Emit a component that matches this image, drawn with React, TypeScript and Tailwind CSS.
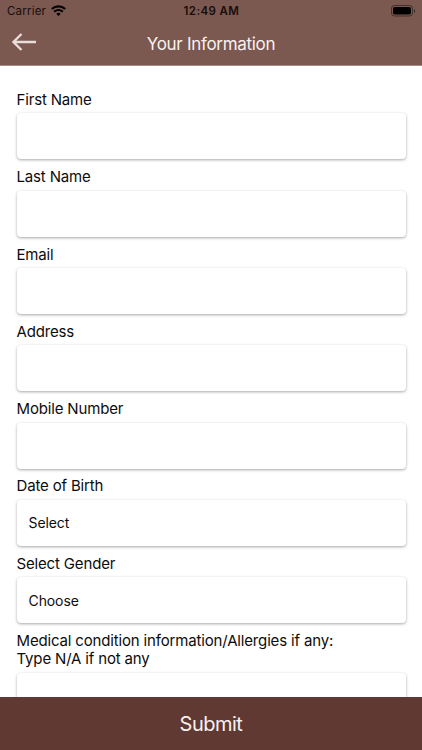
const fields = [
  { label: "First Name" },
  { label: "Last Name" },
  { label: "Email" },
  { label: "Address" },
  { label: "Mobile Number" },
  { label: "Date of Birth", value: "Select" },
  { label: "Select Gender", value: "Choose" },
  { label: "Medical condition information/Allergies if any:\nType N/A if not any" },
];

function StatusBar() {
  return (
    <div className="grid h-[22px] grid-cols-3 items-center pr-[6px] pl-[7px] text-[11.5px] text-[#180e0c]">
      <div className="flex items-center gap-[5px]">
        <span className="pt-px tracking-[0.2px]">Carrier</span>
        <svg className="-mt-px" width="15" height="11" viewBox="0 0 15 11" fill="none" stroke="#000" strokeWidth="2.1">
          <path d="M0.8 4.1a9.6 9.6 0 0 1 13.4 0" />
          <path d="M3.2 6.7a6.2 6.2 0 0 1 8.6 0" />
          <path d="M7.5 11L5.3 8.8a3.1 3.1 0 0 1 4.4 0z" fill="#000" stroke="none" />
        </svg>
      </div>
      <div className="pt-px text-center font-semibold tracking-[0.4px] whitespace-nowrap">12:49 AM</div>
      <svg className="-mt-px justify-self-end" width="25" height="12" viewBox="0 0 25 12">
        <rect x="0.5" y="0.5" width="21" height="10.5" rx="3" fill="none" stroke="#000" strokeOpacity="0.45" />
        <rect x="2" y="2" width="18" height="7.5" rx="1.8" />
        <path d="M23 4v4c1.6-.8 1.6-3.2 0-4z" fillOpacity="0.5" />
      </svg>
    </div>
  );
}

function Field({ label, value }: { label: string; value?: string }) {
  return (
    <div className="mb-[8.9px]">
      <div className="mb-[4px] text-[15px] leading-[18.4px] tracking-[-0.16px] whitespace-pre-line">{label}</div>
      <div className="flex h-[46px] items-center rounded-[4px] bg-white px-[12px] text-[14px] tracking-[-0.1px] shadow-[0_1px_3px_rgba(0,0,0,0.35)]">
        {value}
      </div>
    </div>
  );
}

export default function App() {
  return (
    <div className="flex h-[750px] w-[422px] flex-col overflow-hidden bg-white font-['Inter',sans-serif] text-[#0c0c0c]">
      <header className="h-[66px] shrink-0 border-b border-[#a58c87] bg-[#7b5850]">
        <StatusBar />
        <div className="grid h-[43px] grid-cols-[48px_1fr_48px] items-center text-[#f8f1ef]">
          <svg className="-mt-[3px] ml-[12px]" width="25" height="18" viewBox="0 0 25 18" fill="none" stroke="#e9dcd9" strokeWidth="2.3">
            <path d="M24 9H1.5M9.5 1L1.5 9L9.5 17" />
          </svg>
          <h1 className="pt-[2px] text-center text-[17px] tracking-[-0.3px]">Your Information</h1>
        </div>
      </header>
      <main className="min-h-0 flex-1 overflow-hidden pt-[25px] pr-[16.5px] pl-[16.5px]">
        {fields.map((field) => (
          <Field key={field.label} {...field} />
        ))}
      </main>
      <button className="h-[53px] shrink-0 bg-[#603a32] text-[20px] tracking-[-0.5px] text-[#f8f1ef]">Submit</button>
    </div>
  );
}
